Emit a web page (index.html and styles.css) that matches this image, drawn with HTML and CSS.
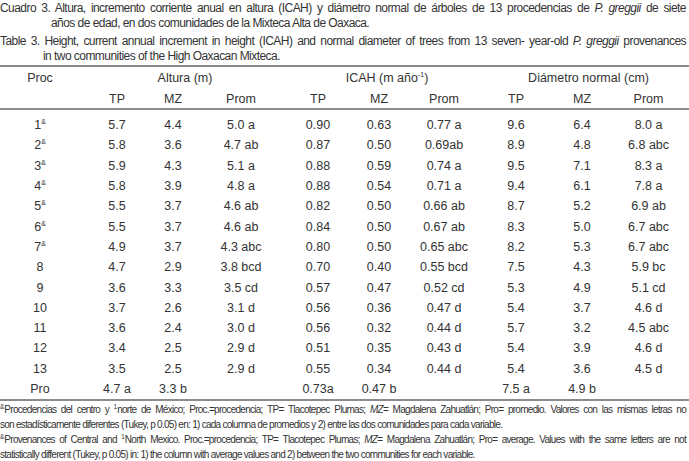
FILE: index.html
```html
<!DOCTYPE html>
<html lang="es">
<head>
<meta charset="utf-8">
<title>Cuadro 3</title>
<link rel="stylesheet" href="styles.css">
</head>
<body>
<div class="page">
  <div class="caption">
    <p class="cap cap-es"><span class="line full">Cuadro 3. Altura, incremento corriente anual en altura (ICAH) y diámetro normal de árboles de 13 procedencias de <i>P. greggii</i> de siete</span><span class="line">años de edad, en dos comunidades de la Mixteca Alta de Oaxaca.</span></p>
    <p class="cap cap-en"><span class="line full">Table 3. Height, current annual increment in height (ICAH) and normal diameter of trees from 13 seven- year-old <i>P. greggii</i> provenances</span><span class="line">in two communities of the High Oaxacan Mixteca.</span></p>
  </div>
  <table class="data">
    <colgroup>
      <col class="c1"><col class="c2"><col class="c3"><col class="c4"><col class="c5"><col class="c6"><col class="c7"><col class="c8"><col class="c9"><col class="c10">
    </colgroup>
    <thead>
      <tr class="h1">
        <th>Proc</th>
        <th colspan="3">Altura (m)</th>
        <th colspan="3" class="icah">ICAH (m año<sup>-1</sup>)</th>
        <th colspan="3" class="diam">Diámetro normal (cm)</th>
      </tr>
      <tr class="h2">
        <th></th><th>TP</th><th>MZ</th><th>Prom</th><th>TP</th><th>MZ</th><th>Prom</th><th>TP</th><th>MZ</th><th>Prom</th>
      </tr>
    </thead>
    <tbody>
      <tr class="first"><td>1<sup>&amp;</sup></td><td>5.7</td><td>4.4</td><td>5.0 a</td><td>0.90</td><td>0.63</td><td>0.77 a</td><td>9.6</td><td>6.4</td><td>8.0 a</td></tr>
      <tr><td>2<sup>&amp;</sup></td><td>5.8</td><td>3.6</td><td>4.7 ab</td><td>0.87</td><td>0.50</td><td>0.69ab</td><td>8.9</td><td>4.8</td><td>6.8 abc</td></tr>
      <tr><td>3<sup>&amp;</sup></td><td>5.9</td><td>4.3</td><td>5.1 a</td><td>0.88</td><td>0.59</td><td>0.74 a</td><td>9.5</td><td>7.1</td><td>8.3 a</td></tr>
      <tr><td>4<sup>&amp;</sup></td><td>5.8</td><td>3.9</td><td>4.8 a</td><td>0.88</td><td>0.54</td><td>0.71 a</td><td>9.4</td><td>6.1</td><td>7.8 a</td></tr>
      <tr><td>5<sup>&amp;</sup></td><td>5.5</td><td>3.7</td><td>4.6 ab</td><td>0.82</td><td>0.50</td><td>0.66 ab</td><td>8.7</td><td>5.2</td><td>6.9 ab</td></tr>
      <tr><td>6<sup>&amp;</sup></td><td>5.5</td><td>3.7</td><td>4.6 ab</td><td>0.84</td><td>0.50</td><td>0.67 ab</td><td>8.3</td><td>5.0</td><td>6.7 abc</td></tr>
      <tr><td>7<sup>&amp;</sup></td><td>4.9</td><td>3.7</td><td>4.3 abc</td><td>0.80</td><td>0.50</td><td>0.65 abc</td><td>8.2</td><td>5.3</td><td>6.7 abc</td></tr>
      <tr><td>8</td><td>4.7</td><td>2.9</td><td>3.8 bcd</td><td>0.70</td><td>0.40</td><td>0.55 bcd</td><td>7.5</td><td>4.3</td><td>5.9 bc</td></tr>
      <tr><td>9</td><td>3.6</td><td>3.3</td><td>3.5 cd</td><td>0.57</td><td>0.47</td><td>0.52 cd</td><td>5.3</td><td>4.9</td><td>5.1 cd</td></tr>
      <tr><td>10</td><td>3.7</td><td>2.6</td><td>3.1 d</td><td>0.56</td><td>0.36</td><td>0.47 d</td><td>5.4</td><td>3.7</td><td>4.6 d</td></tr>
      <tr><td>11</td><td>3.6</td><td>2.4</td><td>3.0 d</td><td>0.56</td><td>0.32</td><td>0.44 d</td><td>5.7</td><td>3.2</td><td>4.5 abc</td></tr>
      <tr><td>12</td><td>3.4</td><td>2.5</td><td>2.9 d</td><td>0.51</td><td>0.35</td><td>0.43 d</td><td>5.4</td><td>3.9</td><td>4.6 d</td></tr>
      <tr><td>13</td><td>3.5</td><td>2.5</td><td>2.9 d</td><td>0.55</td><td>0.34</td><td>0.44 d</td><td>5.4</td><td>3.6</td><td>4.5 d</td></tr>
      <tr class="pro"><td>Pro</td><td>4.7 a</td><td>3.3 b</td><td></td><td>0.73a</td><td>0.47 b</td><td></td><td>7.5 a</td><td>4.9 b</td><td></td></tr>
    </tbody>
  </table>
  <div class="notes">
    <p class="note"><span class="line full"><sup>&amp;</sup>Procedencias del centro y <sup>1</sup>norte de México; Proc.=procedencia; TP= Tlacotepec Plumas; <i>MZ</i>= Magdalena Zahuatlán; Pro= promedio. Valores con las mismas letras no</span><span class="line">son estadísticamente diferentes (Tukey, p 0.05) en: 1) cada columna de promedios y 2) entre las dos comunidades para cada variable.</span></p>
    <p class="note"><span class="line full"><sup>&amp;</sup>Provenances of Central and <sup>1</sup>North Mexico. Proc.=procedencia; TP= Tlacotepec Plumas; <i>MZ</i>= Magdalena Zahuatlán; Pro= average. Values with the same letters are not</span><span class="line">statistically different (Tukey, p 0.05) in: 1) the column with average values and 2) between the two communities for each variable.</span></p>
  </div>
</div>
</body>
</html>
```
FILE: styles.css
```css
html, body {
  margin: 0;
  padding: 0;
  background: #ffffff;
}
body {
  font-family: "Liberation Sans", Arial, sans-serif;
  color: #333333;
  width: 689px;
}
.page {
  width: 689px;
}
.line {
  display: block;
  white-space: nowrap;
}
.line.full {
  white-space: normal;
  text-align: justify;
  text-align-last: justify;
}
.caption {
  padding-top: 1px;
  height: 65px;
  box-sizing: border-box;
}
.cap {
  margin: 0;
  font-size: 12px;
  line-height: 15px;
  letter-spacing: -0.55px;
}
.cap-es .line { padding-left: 51px; }
.cap-en .line { padding-left: 43px; }
.cap .line.full { padding-left: 0; width: 686px; }
.cap-en {
  margin-top: 3px;
}
.data {
  width: 689px;
  border-collapse: collapse;
  table-layout: fixed;
  border-top: 2px solid #8c8c8c;
  border-bottom: 2px solid #8c8c8c;
  font-size: 12.5px;
}
.c1 { width: 80px; }
.c2 { width: 74px; }
.c3 { width: 38px; }
.c4 { width: 98px; }
.c5 { width: 56px; }
.c6 { width: 66px; }
.c7 { width: 64px; }
.c8 { width: 80px; }
.c9 { width: 52px; }
.c10 { width: 81px; }
.data th, .data td {
  padding: 0;
  text-align: center;
  font-weight: normal;
  white-space: nowrap;
}
.h1 th { height: 22px; vertical-align: middle; }
.h2 th { height: 19px; vertical-align: middle; }
.h1 .icah { padding-left: 8px; }
.h1 .diam { padding-left: 12px; }
thead { border-bottom: 2px solid #8c8c8c; }
.data td { height: 20.3px; }
.first td { padding-top: 5px; }
.data sup {
  font-size: 7px;
  vertical-align: 5px;
  line-height: 0;
}
.notes {
  padding-top: 2px;
}
.note {
  margin: 0;
  font-size: 10px;
  line-height: 14.5px;
  letter-spacing: -0.72px;
}
.note + .note { margin-top: 1px; }
.note .line.full { width: 686px; }
.note sup {
  font-size: 6.5px;
  vertical-align: 4px;
  line-height: 0;
  letter-spacing: 0;
}
.cap i, .note i { font-style: italic; }
```
